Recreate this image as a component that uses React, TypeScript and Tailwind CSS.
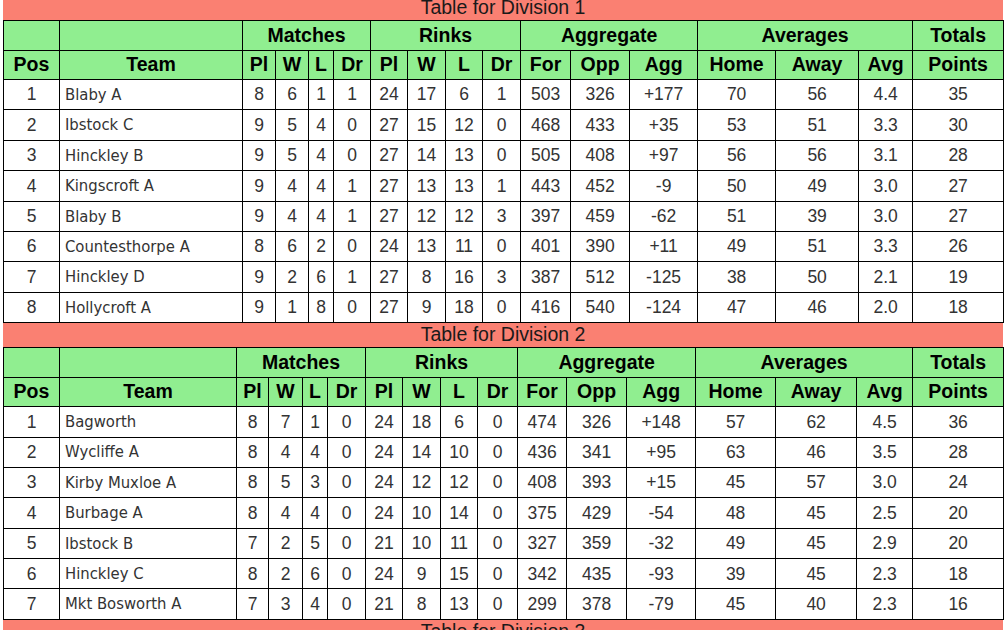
import React from "react";

type Row = (string | number)[];

const div1: Row[] = [
  [1, "Blaby A", 8, 6, 1, 1, 24, 17, 6, 1, 503, 326, "+177", 70, 56, "4.4", 35],
  [2, "Ibstock C", 9, 5, 4, 0, 27, 15, 12, 0, 468, 433, "+35", 53, 51, "3.3", 30],
  [3, "Hinckley B", 9, 5, 4, 0, 27, 14, 13, 0, 505, 408, "+97", 56, 56, "3.1", 28],
  [4, "Kingscroft A", 9, 4, 4, 1, 27, 13, 13, 1, 443, 452, "-9", 50, 49, "3.0", 27],
  [5, "Blaby B", 9, 4, 4, 1, 27, 12, 12, 3, 397, 459, "-62", 51, 39, "3.0", 27],
  [6, "Countesthorpe A", 8, 6, 2, 0, 24, 13, 11, 0, 401, 390, "+11", 49, 51, "3.3", 26],
  [7, "Hinckley D", 9, 2, 6, 1, 27, 8, 16, 3, 387, 512, "-125", 38, 50, "2.1", 19],
  [8, "Hollycroft A", 9, 1, 8, 0, 27, 9, 18, 0, 416, 540, "-124", 47, 46, "2.0", 18],
];

const div2: Row[] = [
  [1, "Bagworth", 8, 7, 1, 0, 24, 18, 6, 0, 474, 326, "+148", 57, 62, "4.5", 36],
  [2, "Wycliffe A", 8, 4, 4, 0, 24, 14, 10, 0, 436, 341, "+95", 63, 46, "3.5", 28],
  [3, "Kirby Muxloe A", 8, 5, 3, 0, 24, 12, 12, 0, 408, 393, "+15", 45, 57, "3.0", 24],
  [4, "Burbage A", 8, 4, 4, 0, 24, 10, 14, 0, 375, 429, "-54", 48, 45, "2.5", 20],
  [5, "Ibstock B", 7, 2, 5, 0, 21, 10, 11, 0, 327, 359, "-32", 49, 45, "2.9", 20],
  [6, "Hinckley C", 8, 2, 6, 0, 24, 9, 15, 0, 342, 435, "-93", 39, 45, "2.3", 18],
  [7, "Mkt Bosworth A", 7, 3, 4, 0, 21, 8, 13, 0, 299, 378, "-79", 45, 40, "2.3", 16],
];

const w1 = [56, 183, 33, 33, 25, 37, 37, 38, 37, 38, 50, 59, 68, 78, 83, 54, 91];
const w2 = [56, 177, 32, 34, 25, 38, 37, 38, 37, 40, 49, 60, 69, 80, 81, 56, 91];

const labels = ["Pos", "Team", "Pl", "W", "L", "Dr", "Pl", "W", "L", "Dr", "For", "Opp", "Agg", "Home", "Away", "Avg", "Points"];

const arial = { fontFamily: '"Liberation Sans", Arial, sans-serif' };

function Title({ text }: { text: string }) {
  return (
    <div
      className="h-[24px] bg-[#fa8072] text-center text-[19.5px] leading-[22px] text-[#1a1a1a]"
      style={arial}
    >
      {text}
    </div>
  );
}

function Division({ title, widths, rows }: { title: string; widths: number[]; rows: Row[] }) {
  const th = "border border-black bg-[#90ee90] font-bold text-[19.5px] text-black text-center p-0 leading-none";
  return (
    <div>
      <Title text={title} />
      <table className="w-[1000px] table-fixed border-collapse" style={arial}>
        <colgroup>
          {widths.map((w, i) => (
            <col key={i} style={{ width: w }} />
          ))}
        </colgroup>
        <thead>
          <tr className="h-[29.5px]">
            <th className={th}></th>
            <th className={th}></th>
            <th className={th} colSpan={4}>Matches</th>
            <th className={th} colSpan={4}>Rinks</th>
            <th className={th} colSpan={3}>Aggregate</th>
            <th className={th} colSpan={3}>Averages</th>
            <th className={th}>Totals</th>
          </tr>
          <tr className="h-[29.5px]">
            {labels.map((l, i) => (
              <th key={i} className={th}>{l}</th>
            ))}
          </tr>
        </thead>
        <tbody>
          {rows.map((r, ri) => (
            <tr key={ri} className="h-[30.4px] bg-white">
              {r.map((c, ci) =>
                ci === 1 ? (
                  <td
                    key={ci}
                    className="border border-black pl-[5px] pt-[1px] text-left text-[16.5px] leading-none text-[#333] whitespace-nowrap"
                    style={{ fontFamily: '"DejaVu Sans Condensed", "DejaVu Sans", sans-serif' }}
                  >
                    {c}
                  </td>
                ) : (
                  <td key={ci} className="border border-black p-0 pt-[1px] text-center text-[17.5px] leading-none text-[#333]">
                    {c}
                  </td>
                )
              )}
            </tr>
          ))}
        </tbody>
      </table>
    </div>
  );
}

export default function App() {
  return (
    <div className="w-[1006px] h-[630px] overflow-hidden bg-white">
      <div className="-mt-[4px] ml-[3px] w-[1000px]">
        <Division title="Table for Division 1" widths={w1} rows={div1} />
        <Division title="Table for Division 2" widths={w2} rows={div2} />
        <Title text="Table for Division 3" />
      </div>
    </div>
  );
}
